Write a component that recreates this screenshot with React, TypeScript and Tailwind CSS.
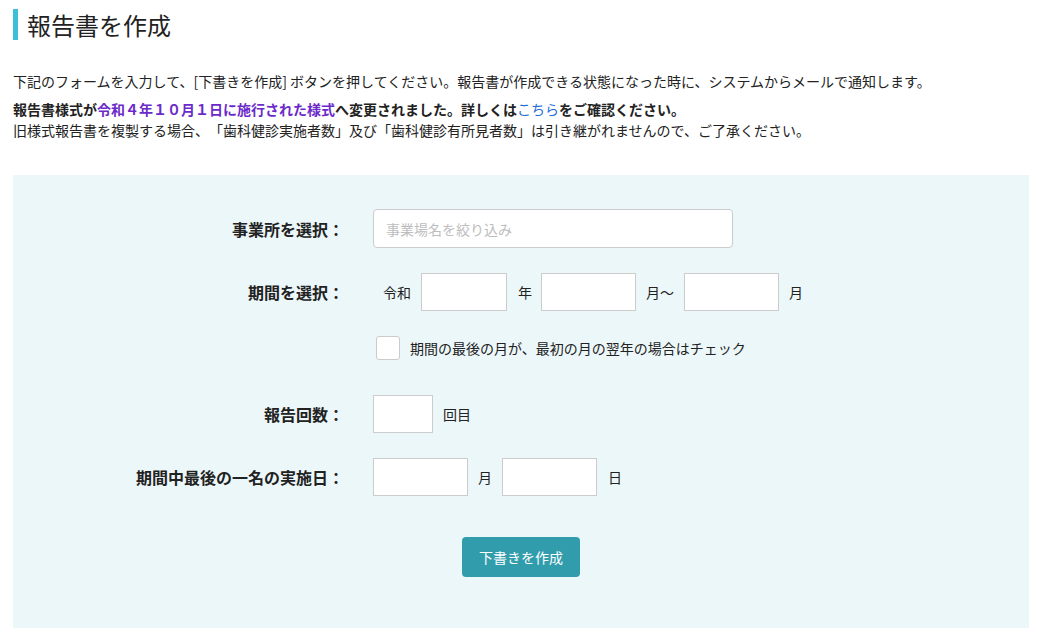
import React from 'react'

const jp = { fontFamily: '"Noto Sans CJK JP", "Noto Sans", sans-serif' }

function Label({ children }: { children: React.ReactNode }) {
  return (
    <div className="w-[331px] shrink-0 text-right text-[16px] font-bold leading-[22px] text-[#222]">
      {children}
    </div>
  )
}

function Box({ w, h = 'h-[38px]' }: { w: string; h?: string }) {
  return <input type="text" className={`${w} ${h} border border-[#cccccc] bg-white outline-none`} />
}

export default function App() {
  return (
    <div style={jp} className="min-h-[632px] bg-white pl-[13px] pr-[8px] text-[#222] [text-spacing-trim:space-all]">
      {/* 見出し */}
      <div className="pt-[9px]">
        <div className="flex h-[31px] items-center border-l-[5px] border-[#3dbfd9] pl-[9px]">
          <h1 className="text-[24px] font-normal leading-[31px] text-[#222]">報告書を作成</h1>
        </div>
      </div>

      {/* 説明 */}
      <p className="mt-[31px] text-[14px] leading-[21px]">
        下記のフォームを入力して、[下書きを作成] ボタンを押してください。報告書が作成できる状態になった時に、システムからメールで通知します。
      </p>
      <p className="mt-[7px] text-[14px] font-bold leading-[21px]">
        報告書様式が<span className="text-[#6c2bc9]">令和４年１０月１日に施行された様式</span>へ変更されました。詳しくは
        <a className="font-normal text-[#1f6fd6]">こちら</a>をご確認ください。
      </p>
      <p className="text-[14px] leading-[21px]">
        旧様式報告書を複製する場合、「歯科健診実施者数」及び「歯科健診有所見者数」は引き継がれませんので、ご了承ください。
      </p>

      {/* フォーム */}
      <div className="mt-[34px] flex h-[453px] flex-col bg-[#ecf7f9] pt-[34px]">
        <div className="flex items-center">
          <Label>事業所を選択：</Label>
          <input
            type="text"
            placeholder="事業場名を絞り込み"
            className="ml-[29px] h-[39px] w-[360px] rounded-[4px] border border-[#cccccc] bg-white px-[12px] text-[14px] outline-none placeholder:text-[#bdbdbd]"
          />
        </div>

        <div className="mt-[25px] flex items-center">
          <Label>期間を選択：</Label>
          <div className="ml-[29px] flex items-center text-[14px]">
            <span className="ml-[10px] mr-[10px]">令和</span>
            <Box w="w-[86px]" />
            <span className="ml-[11px] mr-[9px]">年</span>
            <Box w="w-[95px]" />
            <span className="ml-[10px] mr-[10px]">月〜</span>
            <Box w="w-[95px]" />
            <span className="ml-[10px]">月</span>
          </div>
        </div>

        <div className="mt-[25px] flex items-center">
          <div className="w-[331px] shrink-0" />
          <label className="ml-[32px] flex items-center text-[14px]">
            <span className="h-[24px] w-[24px] rounded-[3px] border border-[#cccccc] bg-white" />
            <span className="ml-[10px]">期間の最後の月が、最初の月の翌年の場合はチェック</span>
          </label>
        </div>

        <div className="mt-[35px] flex items-center">
          <Label>報告回数：</Label>
          <div className="ml-[29px] flex items-center text-[14px]">
            <Box w="w-[60px]" />
            <span className="ml-[10px]">回目</span>
          </div>
        </div>

        <div className="mt-[25px] flex items-center">
          <Label>期間中最後の一名の実施日：</Label>
          <div className="ml-[29px] flex items-center text-[14px]">
            <Box w="w-[95px]" />
            <span className="ml-[10px] mr-[10px]">月</span>
            <Box w="w-[95px]" />
            <span className="ml-[11px]">日</span>
          </div>
        </div>

        <div className="mt-[41px] flex justify-center">
          <button className="h-[40px] w-[118px] rounded-[4px] bg-[#319dac] text-[14px] text-white">
            下書きを作成
          </button>
        </div>
      </div>
    </div>
  )
}
